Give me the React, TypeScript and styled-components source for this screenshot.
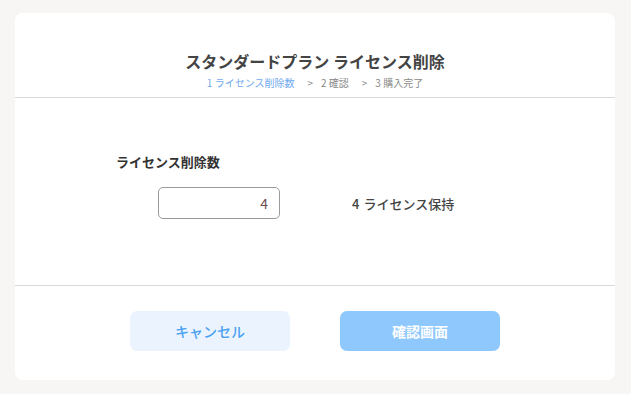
import React from "react";
import styled, { createGlobalStyle } from "styled-components";

const Global = createGlobalStyle`
  html, body { margin: 0; padding: 0; background: #f7f6f4; }
  body { font-family: "Noto Sans CJK JP", "Noto Sans", sans-serif; }
  * { box-sizing: border-box; }
`;

const Page = styled.div`
  width: 631px;
  height: 394px;
  padding: 13px 16px 14px 15px;
`;

const Card = styled.div`
  width: 600px;
  height: 367px;
  background: #ffffff;
  border-radius: 8px;
  display: flex;
  flex-direction: column;
  overflow: hidden;
`;

const Header = styled.div`
  padding: 36px 0 7px;
  display: flex;
  flex-direction: column;
  align-items: center;
  gap: 3px;
  border-bottom: 1px solid #d9d9d9;
`;

const Title = styled.h1`
  margin: 0;
  font-size: 16px;
  line-height: 24px;
  font-weight: 700;
  color: #444444;
`;

const Steps = styled.div`
  display: flex;
  align-items: center;
  font-size: 10px;
  line-height: 14px;
  color: #8a8a8a;
`;

const Step = styled.span<{ $active?: boolean }>`
  color: ${(p) => (p.$active ? "#6ea9ee" : "#8a8a8a")};
`;

const Arrow = styled.span`
  margin: 0 8px 0 13px;
  color: #8a8a8a;
`;

const Body = styled.div`
  height: 188px;
  padding: 55px 0 0 101px;
  border-bottom: 1px solid #d9d9d9;
  display: flex;
  flex-direction: column;
  gap: 16px;
`;

const Label = styled.div`
  font-size: 13px;
  line-height: 18px;
  font-weight: 700;
  color: #333333;
`;

const Row = styled.div`
  display: flex;
  align-items: center;
  margin-left: 42px;
  gap: 72px;
`;

const Input = styled.input`
  width: 122px;
  height: 32px;
  border: 1px solid #9a9a9a;
  border-radius: 5px;
  padding: 0 11px;
  text-align: right;
  font-family: inherit;
  font-size: 14px;
  color: #6d5050;
  outline: none;
  background: #fff;
`;

const Keep = styled.div`
  display: flex;
  align-items: baseline;
  gap: 4px;
  font-size: 13px;
  font-weight: 500;
  color: #444444;
`;

const Footer = styled.div`
  flex: 1;
  display: flex;
  justify-content: center;
  padding-top: 25px;
  gap: 50px;
`;

const Button = styled.button<{ $primary?: boolean }>`
  width: 160px;
  height: 40px;
  border: none;
  border-radius: 7px;
  font-family: inherit;
  font-size: 14px;
  font-weight: ${(p) => (p.$primary ? 700 : 500)};
  background: ${(p) => (p.$primary ? "#8fc8fd" : "#ebf4fe")};
  color: ${(p) => (p.$primary ? "#ffffff" : "#4aa0f2")};
  cursor: pointer;
`;

export default function App() {
  return (
    <>
      <Global />
      <Page>
        <Card>
          <Header>
            <Title>スタンダードプラン ライセンス削除</Title>
            <Steps>
              <Step $active>1 ライセンス削除数</Step>
              <Arrow>&gt;</Arrow>
              <Step>2 確認</Step>
              <Arrow>&gt;</Arrow>
              <Step>3 購入完了</Step>
            </Steps>
          </Header>
          <Body>
            <Label>ライセンス削除数</Label>
            <Row>
              <Input defaultValue="4" />
              <Keep>
                <span>4</span>
                <span>ライセンス保持</span>
              </Keep>
            </Row>
          </Body>
          <Footer>
            <Button>キャンセル</Button>
            <Button $primary>確認画面</Button>
          </Footer>
        </Card>
      </Page>
    </>
  );
}
